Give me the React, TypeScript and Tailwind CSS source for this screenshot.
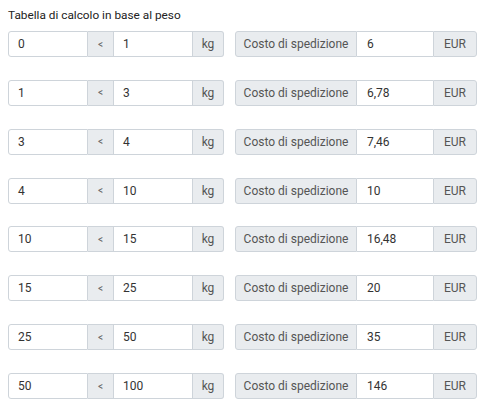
import React from "react";

const rows: [string, string, string][] = [
  ["0", "1", "6"],
  ["1", "3", "6,78"],
  ["3", "4", "7,46"],
  ["4", "10", "10"],
  ["10", "15", "16,48"],
  ["15", "25", "20"],
  ["25", "50", "35"],
  ["50", "100", "146"],
];

export default function App() {
  return (
    <div
      className="w-[490px] h-[418px] bg-white pl-[8px] pt-[8px]"
      style={{ fontFamily: "Roboto, 'Liberation Sans', sans-serif" }}
    >
      <div className="text-[11.8px] leading-[15px] text-[#222] h-[15px]">Tabella di calcolo in base al peso</div>
      <div className="mt-[8px] flex flex-col gap-y-[22.86px]">
        {rows.map(([a, b, c], i) => (
          <div key={i} className="flex items-stretch h-[26px] text-[12px] text-[#444]">
            <div className="flex w-[216px]">
              <div className="w-[80px] border border-[#ced4da] rounded-l-[3px] bg-white flex items-center pl-[9px] text-[#333]">{a}</div>
              <div className="w-[25px] border-y border-[#ced4da] bg-[#e9ecef] flex items-center justify-center text-[10px] text-[#666]">&lt;</div>
              <div className="w-[80px] border border-[#ced4da] bg-white flex items-center pl-[9px] text-[#333]">{b}</div>
              <div className="w-[31px] border-y border-r border-[#ced4da] rounded-r-[3px] bg-[#e9ecef] flex items-center justify-center text-[#555]">kg</div>
            </div>
            <div className="flex w-[242px] ml-[11px]">
              <div className="w-[122px] border border-[#ced4da] rounded-l-[3px] bg-[#e9ecef] flex items-center justify-center text-[#555]">Costo di spedizione</div>
              <div className="w-[76px] border-y border-[#ced4da] bg-white flex items-center pl-[10px] text-[#333]">{c}</div>
              <div className="w-[44px] border border-[#ced4da] rounded-r-[3px] bg-[#e9ecef] flex items-center justify-center text-[#555]">EUR</div>
            </div>
          </div>
        ))}
      </div>
    </div>
  );
}
